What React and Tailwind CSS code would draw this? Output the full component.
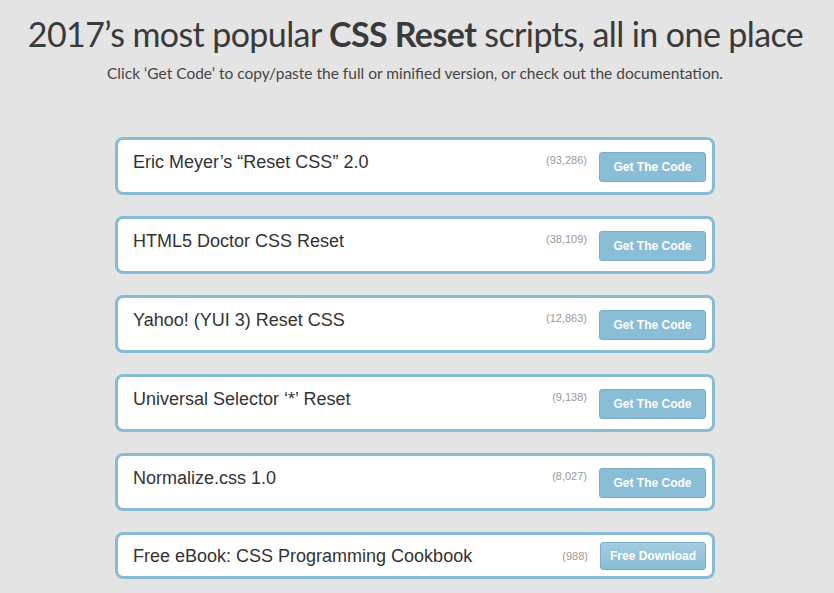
import React from 'react';

const scripts = [
  { name: 'Eric Meyer’s “Reset CSS” 2.0', count: '(93,286)' },
  { name: 'HTML5 Doctor CSS Reset', count: '(38,109)' },
  { name: 'Yahoo! (YUI 3) Reset CSS', count: '(12,863)' },
  { name: 'Universal Selector ‘*’ Reset', count: '(9,138)' },
  { name: 'Normalize.css 1.0', count: '(8,027)' },
];

const App = () => {
  return (
    <div className="min-h-screen bg-[#e4e4e4] flex flex-col items-center font-['Liberation_Sans',Arial,sans-serif]">
      {/* Header */}
      <h1 className="mt-[12px] mr-[3px] whitespace-nowrap text-[34px] leading-[44px] text-[#3a3a3a] font-['Lato',sans-serif] tracking-[-0.6px]">
        2017’s most popular <span className="font-bold">CSS Reset</span> scripts, all in one place
      </h1>
      <p className="mt-[8px] mr-[4px] whitespace-nowrap text-[15.5px] leading-[18px] text-[#444] font-['Lato',sans-serif]">
        Click ‘Get Code’ to copy/paste the full or minified version, or check out the documentation.
      </p>

      {/* List */}
      <div className="mt-[55px] mr-[4px] w-[600px] flex flex-col gap-[21px]">
        {scripts.map((s) => (
          <div key={s.name} className="h-[58px] bg-white border-[3px] border-[#88bcd3] rounded-[8px] flex items-start pl-[15px] pr-[6px]">
            <div className="flex-1 pt-[10px] text-[18px] leading-[24px] text-[#333]">{s.name}</div>
            <div className="pt-[13px] mr-[12px] text-[11px] leading-[14px] text-[#999]">{s.count}</div>
            <button className="mt-[12px] w-[107px] h-[30px] rounded-[3px] bg-[#89bed6] border border-[#7aaec6] text-white text-[12px] font-bold">
              Get The Code
            </button>
          </div>
        ))}
        <div className="h-[47px] bg-white border-[3px] border-[#88bcd3] rounded-[8px] flex items-center pl-[15px] pr-[6px]">
          <div className="flex-1 text-[18px] leading-[24px] text-[#333]">Free eBook: CSS Programming Cookbook</div>
          <div className="mr-[12px] text-[11px] leading-[14px] text-[#a8968a]">(988)</div>
          <button className="w-[106px] h-[28px] rounded-[3px] bg-gradient-to-b from-[#a3cde0] to-[#88bdd4] border border-[#7aaec6] text-white text-[12px] font-bold">
            Free Download
          </button>
        </div>
      </div>
    </div>
  );
};

export default App;
